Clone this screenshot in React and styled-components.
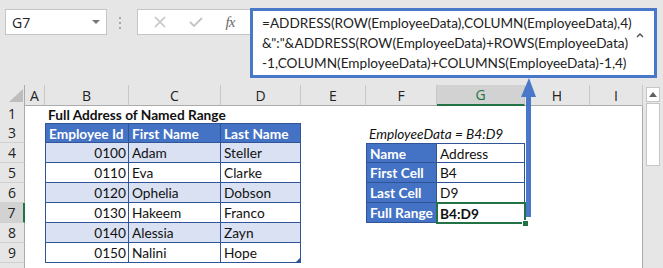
import React from 'react';
import styled, { createGlobalStyle, css } from 'styled-components';

const GREEN = '#217346';
const BLUE = '#4472c4';
const DARK = '#2f5597';
const BAND = '#d9e1f2';

const GlobalStyle = createGlobalStyle`
  html, body { margin: 0; padding: 0; background: #fff; overflow: hidden; }
  body { width: 663px; height: 268px; }
`;

const Page = styled.div`
  position: relative;
  width: 663px;
  height: 268px;
  overflow: hidden;
  font-family: 'Open Sans', 'Noto Sans', sans-serif;
`;

// barra de formulas
const TopBar = styled.div`
  display: flex;
  align-items: flex-start;
  height: 85px;
  background: #e6e6e6;
  box-sizing: border-box;
  padding-top: 8px;
`;

const NameBox = styled.div`
  display: flex;
  align-items: center;
  justify-content: space-between;
  margin: 1px 0 0 5px;
  width: 102px;
  height: 26px;
  box-sizing: border-box;
  background: #fff;
  border: 1px solid #c6c6c6;
  padding: 0 6px 0 6px;
  font-size: 14px;
  color: #222;
`;

const Caret = styled.span`
  width: 0;
  height: 0;
  border-left: 4px solid transparent;
  border-right: 4px solid transparent;
  border-top: 4px solid #777;
`;

const Dots = styled.div`
  display: flex;
  flex-direction: column;
  gap: 3px;
  margin: 9px 16px 0 12px;
  span {
    width: 2px;
    height: 2px;
    background: #a8a8a8;
  }
`;

const FxGroup = styled.div`
  display: flex;
  align-items: center;
  justify-content: space-around;
  margin-top: 1px;
  width: 113px;
  height: 26px;
  box-sizing: border-box;
  background: #fff;
  border: 1px solid #c6c6c6;
  border-right: none;
  padding: 0 4px;
`;

const FxLabel = styled.span`
  font-family: 'Liberation Serif', serif;
  font-style: italic;
  font-size: 15px;
  color: #6a6a6a;
  letter-spacing: -1px;
`;

const FormulaBox = styled.div`
  display: flex;
  width: 407px;
  height: 70px;
  box-sizing: border-box;
  background: #fff;
  border: 3px solid #4a78c8;
  padding: 2px 0 0 9px;
`;

const FormulaText = styled.div`
  flex: 1;
  font-family: Lato, 'Open Sans', sans-serif;
  font-size: 13.6px;
  line-height: 20px;
  color: #222;
  white-space: pre;
`;

const UpCaret = styled.div`
  width: 12px;
  padding: 8px 6px 0 0;
`;

// hoja
const SheetWrap = styled.div`
  display: flex;
`;

const Grid = styled.div`
  width: 643px;
  border-right: 1px solid #ababab;
  box-sizing: border-box;
`;

const Row = styled.div`
  display: grid;
  grid-template-columns: 25px 20px 84px 92px 80px 65px 71px 88px 65px 53px;
  height: ${p => p.$h || 20}px;
`;

const HeadCell = styled.div`
  display: flex;
  align-items: center;
  justify-content: center;
  box-sizing: border-box;
  background: ${p => (p.$active ? '#d2d2d2' : '#e6e6e6')};
  color: ${p => (p.$active ? GREEN : '#222')};
  border-right: 1px solid #c8c8c8;
  border-bottom: ${p => (p.$active ? `2px solid ${GREEN}` : '1px solid #ababab')};
  font-size: 14px;
`;

const Corner = styled(HeadCell)`
  align-items: flex-end;
  justify-content: flex-end;
  padding: 0 1px 3px 0;
  border-right: 1px solid #ababab;
`;

const RowHead = styled.div`
  display: flex;
  align-items: center;
  justify-content: center;
  box-sizing: border-box;
  background: ${p => (p.$active ? '#d2d2d2' : '#e6e6e6')};
  border-right: ${p => (p.$active ? `2px solid ${GREEN}` : '1px solid #ababab')};
  border-bottom: 1px solid #d0d0d0;
  font-size: 14px;
  color: #222;
`;

const Cell = styled.div`
  position: relative;
  display: flex;
  align-items: center;
  justify-content: ${p => (p.$right ? 'flex-end' : 'flex-start')};
  box-sizing: border-box;
  padding: 0 2px 0 3px;
  font-family: Lato, 'Open Sans', sans-serif;
  font-size: 13.7px;
  color: #111;
  white-space: nowrap;
  overflow: visible;
  background: ${p => p.$bg || 'transparent'};
  font-weight: ${p => (p.$bold ? 700 : 400)};
  font-style: ${p => (p.$italic ? 'italic' : 'normal')};
  ${p => p.$head && css`
    background: ${BLUE};
    color: #fff;
    font-weight: 700;
  `}
  ${p => p.$t && css`
    border-right: 1px solid ${DARK};
    border-bottom: 1px solid ${DARK};
  `}
  ${p => p.$l && css`border-left: 1px solid ${DARK};`}
  ${p => p.$top && css`border-top: 1px solid ${DARK};`}
  ${p => p.$sel && css`
    outline: 2px solid ${GREEN};
    outline-offset: -1px;
    z-index: 2;
    &::after {
      content: '';
      position: absolute;
      right: -4px;
      bottom: -4px;
      width: 5px;
      height: 5px;
      background: ${GREEN};
      border: 1px solid #fff;
    }
  `}
  ${p => p.$handle && css`
    &::after {
      content: '';
      position: absolute;
      right: 0;
      bottom: 0;
      border-left: 4px solid transparent;
      border-bottom: 4px solid ${DARK};
    }
  `}
`;

const Title = styled.span`
  font-weight: 700;
  position: relative;
  z-index: 1;
`;

const VScroll = styled.div`
  width: 20px;
  height: 183px;
  background: #e6e6e6;
  display: flex;
  flex-direction: column;
  align-items: center;
  padding-top: 2px;
  gap: 1px;
`;

const ScrollBtn = styled.div`
  width: 14px;
  height: 15px;
  box-sizing: border-box;
  background: #fff;
  border: 1px solid #c6c6c6;
  display: flex;
  align-items: center;
  justify-content: center;
`;

const Thumb = styled.div`
  width: 14px;
  height: 63px;
  box-sizing: border-box;
  background: #fff;
  border: 1px solid #c6c6c6;
`;

const ArrowSvg = styled.svg`
  position: absolute;
  left: 518px;
  top: 76px;
  z-index: 5;
`;

const people = [
  ['0100', 'Adam', 'Steller'],
  ['0110', 'Eva', 'Clarke'],
  ['0120', 'Ophelia', 'Dobson'],
  ['0130', 'Hakeem', 'Franco'],
  ['0140', 'Alessia', 'Zayn'],
  ['0150', 'Nalini', 'Hope'],
];

const lookup = [
  ['Name', 'Address'],
  ['First Cell', 'B4'],
  ['Last Cell', 'D9'],
  ['Full Range', 'B4:D9'],
];

const cols = ['A', 'B', 'C', 'D', 'E', 'F', 'G', 'H', 'I'];

export default function App() {
  return (
    <Page>
      <GlobalStyle />
      <TopBar>
        <NameBox>
          <span>G7</span>
          <Caret />
        </NameBox>
        <Dots><span /><span /><span /></Dots>
        <FxGroup>
          <svg width="12" height="12" viewBox="0 0 12 12">
            <path d="M1 1 L11 11 M11 1 L1 11" stroke="#c4c4c4" strokeWidth="1.6" />
          </svg>
          <svg width="14" height="12" viewBox="0 0 14 12">
            <path d="M1 6 L5 10 L13 2" stroke="#c4c4c4" strokeWidth="1.8" fill="none" />
          </svg>
          <FxLabel>fx</FxLabel>
        </FxGroup>
        <FormulaBox>
          <FormulaText>
            {'=ADDRESS(ROW(EmployeeData),COLUMN(EmployeeData),4)\n&":"&ADDRESS(ROW(EmployeeData)+ROWS(EmployeeData)\n-1,COLUMN(EmployeeData)+COLUMNS(EmployeeData)-1,4)'}
          </FormulaText>
          <UpCaret>
            <svg width="8" height="6" viewBox="0 0 8 6">
              <path d="M1 5 L4 2 L7 5" stroke="#555" strokeWidth="1.5" fill="none" />
            </svg>
          </UpCaret>
        </FormulaBox>
      </TopBar>

      <SheetWrap>
        <Grid>
          <Row $h={19}>
            <Corner>
              <svg width="14" height="13" viewBox="0 0 14 13">
                <path d="M14 0 L14 13 L0 13 Z" fill="#bdbdbd" />
              </svg>
            </Corner>
            {cols.map(c => (
              <HeadCell key={c} $active={c === 'G'}>{c}</HeadCell>
            ))}
          </Row>

          <Row $h={19}>
            <RowHead>1</RowHead>
            <Cell />
            <Cell><Title>Full Address of Named Range</Title></Cell>
            <Cell /><Cell /><Cell /><Cell /><Cell /><Cell /><Cell />
          </Row>

          <Row>
            <RowHead>3</RowHead>
            <Cell />
            <Cell $head $t $l $top>Employee Id</Cell>
            <Cell $head $t $top>First Name</Cell>
            <Cell $head $t $top>Last Name</Cell>
            <Cell />
            <Cell $italic>EmployeeData = B4:D9</Cell>
            <Cell /><Cell /><Cell />
          </Row>

          {people.map((p, i) => {
            const n = i + 4;
            const bg = i % 2 === 0 ? BAND : '#fff';
            const look = lookup[i];
            return (
              <Row key={n}>
                <RowHead $active={n === 7}>{n}</RowHead>
                <Cell />
                <Cell $t $l $right $bg={bg}>{p[0]}</Cell>
                <Cell $t $bg={bg}>{p[1]}</Cell>
                <Cell $t $bg={bg} $handle={n === 9}>{p[2]}</Cell>
                <Cell />
                {look ? (
                  <>
                    <Cell $head $t $l $top={n === 4}>{look[0]}</Cell>
                    <Cell
                      $t={n !== 7}
                      $top={n === 4}
                      $sel={n === 7}
                      $bold={n === 7}
                    >
                      {look[1]}
                    </Cell>
                  </>
                ) : (
                  <>
                    <Cell />
                    <Cell />
                  </>
                )}
                <Cell /><Cell />
              </Row>
            );
          })}

          <Row>
            <RowHead />
          </Row>
        </Grid>
        <VScroll>
          <ScrollBtn>
            <svg width="8" height="5" viewBox="0 0 8 5">
              <path d="M0 5 L4 0 L8 5 Z" fill="#606060" />
            </svg>
          </ScrollBtn>
          <Thumb />
        </VScroll>
      </SheetWrap>

      <ArrowSvg width="20" height="145" viewBox="0 0 20 145">
        <polygon points="3,21 11,2 18,21" fill="#4a78c8" />
        <rect x="8" y="19" width="5" height="122" fill="#4a78c8" />
      </ArrowSvg>
    </Page>
  );
}
